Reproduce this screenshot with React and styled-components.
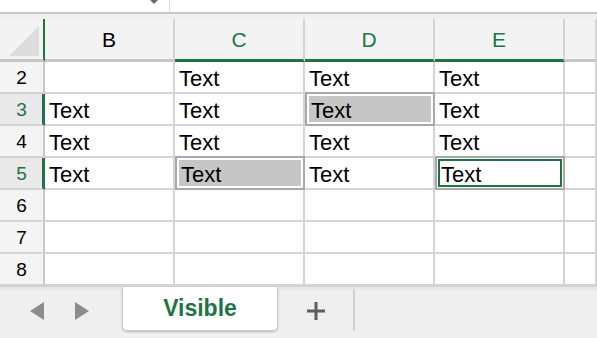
import React from 'react';
import styled, { createGlobalStyle } from "styled-components"

const green = "#217346"
const line = "#d4d4d4"

const Global = createGlobalStyle`
  html, body { margin: 0; padding: 0; background: #fff; }
  body { font-family: "Liberation Sans", Arial, sans-serif; }
`
const Page = styled.div`
  width: 597px;
  height: 338px;
  overflow: hidden;
  display: flex;
  flex-direction: column;
  background: #f0f0f0;
`
const FormulaStrip = styled.div`
  height: 12px;
  display: flex;
  background: #fff;
  border-bottom: 2px solid #c6c6c6;
`
const NameBox = styled.div`
  width: 169px;
  border-right: 1px solid #d6d6d6;
  position: relative;
`
const Caret = styled.div`
  position: absolute;
  left: 150px;
  top: 0;
  width: 0;
  height: 0;
  border-left: 4px solid transparent;
  border-right: 4px solid transparent;
  border-top: 4px solid #6a6a6a;
`
const Spacer = styled.div`
  height: 5px;
  background: #f0f0f0;
`
const Row = styled.div`
  display: flex;
  height: ${p => p.$h || 32}px;
`
const Corner = styled.div`
  width: 45px;
  box-sizing: border-box;
  background: #f3f3f3;
  border-right: 2px solid ${green};
  border-bottom: 3px solid #c6c6c6;
  position: relative;
  svg { position: absolute; right: 4px; bottom: 3px; }
`
const ColHead = styled.div`
  width: ${p => p.$w ? p.$w + "px" : "auto"};
  flex: ${p => p.$w ? "none" : 1};
  box-sizing: border-box;
  background: #f3f3f3;
  border-right: 2px solid ${line};
  border-bottom: 3px solid ${p => p.$sel ? green : "#c6c6c6"};
  color: ${p => p.$sel ? green : "#000"};
  font-size: 21px;
  display: flex;
  align-items: center;
  justify-content: center;
  padding-top: 2px;
`
const RowHead = styled.div`
  width: 45px;
  box-sizing: border-box;
  background: ${p => p.$sel ? "#e9e9e9" : "#f4f4f4"};
  border-right: ${p => p.$sel ? `3px solid ${green}` : "2px solid #c8c8c8"};
  border-bottom: 2px solid ${line};
  color: ${p => p.$sel ? green : "#000"};
  font-size: 19px;
  display: flex;
  align-items: center;
  justify-content: center;
  padding: 2px 0 0 ${p => p.$sel ? 1 : 0}px;
`
const Cell = styled.div`
  width: ${p => p.$w ? p.$w + "px" : "auto"};
  flex: ${p => p.$w ? "none" : 1};
  box-sizing: border-box;
  background: #fff;
  border-right: 2px solid ${line};
  border-bottom: 2px solid ${line};
  font-size: 22px;
  color: #000;
  display: flex;
  align-items: center;
  padding: 3px 0 0 4px;
  position: relative;
  ${p => p.$mark === "gray" && `
    border-color: #a8a8a8;
    border-style: solid;
    border-width: 2px;
    margin-top: -2px;
    height: 34px;
    &::before {
      content: "";
      position: absolute;
      inset: 2px;
      background: #c6c6c6;
    }
  `}
  ${p => p.$mark === "active" && `
    border-color: #a8a8a8;
    border-style: solid;
    border-width: 2px;
    margin-top: -2px;
    height: 34px;
    &::before {
      content: "";
      position: absolute;
      inset: 1px;
      border: 2px solid ${green};
    }
  `}
  span { position: relative; }
`
const TabBar = styled.div`
  flex: 1;
  display: flex;
  align-items: flex-start;
  background: linear-gradient(#e6e6e6, #efefef 5px);
  border-top: 1px solid #d0d0d0;
`
const Arrows = styled.div`
  width: 122px;
  height: 48px;
  display: flex;
  align-items: center;
  padding-left: 30px;
  gap: 31px;
  box-sizing: border-box;
`
const Tab = styled.div`
  width: 156px;
  height: 44px;
  box-sizing: border-box;
  background: #fff;
  border: 1px solid #cdcdcd;
  border-top: none;
  border-radius: 0 0 5px 5px;
  box-shadow: 0 1px 2px rgba(0,0,0,0.25);
  color: ${green};
  font-weight: bold;
  font-size: 23px;
  display: flex;
  align-items: center;
  justify-content: center;
  padding-bottom: 1px;
`
const AddButton = styled.div`
  width: 77px;
  display: flex;
  align-items: center;
  justify-content: center;
  border-right: 2px solid #d0d0d0;
  box-sizing: border-box;
  margin-top: 2px;
  height: 42px;
  padding-top: 2px;
`

const cols = ["B", "C", "D", "E"]
const widths = [130, 130, 130, 130]
const rows = [
  { n: 2, cells: ["", "Text", "Text", "Text"] },
  { n: 3, sel: true, cells: ["Text", "Text", "Text", "Text"], marks: { 2: "gray" } },
  { n: 4, cells: ["Text", "Text", "Text", "Text"] },
  { n: 5, sel: true, cells: ["Text", "Text", "Text", "Text"], marks: { 1: "gray", 3: "active" } },
  { n: 6, cells: ["", "", "", ""] },
  { n: 7, cells: ["", "", "", ""] },
  { n: 8, cells: ["", "", "", ""] },
]

const App = () => {
  return (
    <Page>
      <Global />
      <FormulaStrip>
        <NameBox><Caret /></NameBox>
      </FormulaStrip>
      <Spacer />
      <Row $h={43}>
        <Corner>
          <svg width="30" height="30" viewBox="0 0 30 30">
            <polygon points="30,0 30,30 0,30" fill="#dcdcdc" />
          </svg>
        </Corner>
        {cols.map((c, i) => (
          <ColHead key={c} $w={widths[i]} $sel={i > 0}>{c}</ColHead>
        ))}
        <ColHead />
      </Row>
      {rows.map(r => (
        <Row key={r.n}>
          <RowHead $sel={r.sel}>{r.n}</RowHead>
          {r.cells.map((t, i) => (
            <Cell key={i} $w={widths[i]} $mark={r.marks && r.marks[i]}>
              <span>{t}</span>
            </Cell>
          ))}
          <Cell />
        </Row>
      ))}
      <TabBar>
        <Arrows>
          <svg width="14" height="18" viewBox="0 0 14 18"><polygon points="14,0 14,18 0,9" fill="#8c8c8c" /></svg>
          <svg width="14" height="18" viewBox="0 0 14 18"><polygon points="0,0 0,18 14,9" fill="#8c8c8c" /></svg>
        </Arrows>
        <Tab>Visible</Tab>
        <AddButton>
          <svg width="20" height="20" viewBox="0 0 20 20">
            <path d="M10 1v18M1 10h18" stroke="#5e5e5e" strokeWidth="3" />
          </svg>
        </AddButton>
      </TabBar>
    </Page>
  );
};

export default App;
